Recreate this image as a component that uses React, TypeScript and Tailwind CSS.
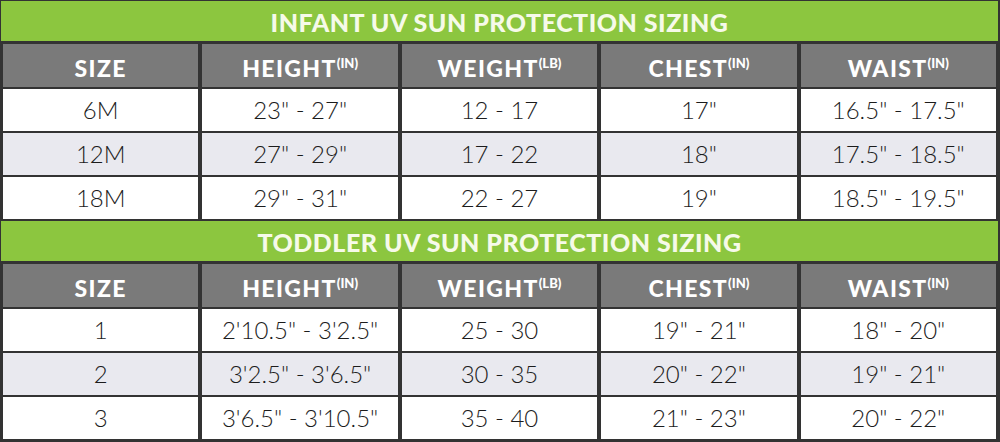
const HEADERS: [string, string | null][] = [
  ['SIZE', null],
  ['HEIGHT', '(IN)'],
  ['WEIGHT', '(LB)'],
  ['CHEST', '(IN)'],
  ['WAIST', '(IN)'],
];

const INFANT = [
  ['6M', '23" - 27"', '12 - 17', '17"', '16.5" - 17.5"'],
  ['12M', '27" - 29"', '17 - 22', '18"', '17.5" - 18.5"'],
  ['18M', '29" - 31"', '22 - 27', '19"', '18.5" - 19.5"'],
];

const TODDLER = [
  ['1', '2\'10.5" - 3\'2.5"', '25 - 30', '19" - 21"', '18" - 20"'],
  ['2', '3\'2.5" - 3\'6.5"', '30 - 35', '20" - 22"', '19" - 21"'],
  ['3', '3\'6.5" - 3\'10.5"', '35 - 40', '21" - 23"', '20" - 22"'],
];

function SizingSection({ title, rows }: { title: string; rows: string[][] }) {
  return (
    <section className="flex flex-col">
      {/* green title banner */}
      <div className="flex h-[40px] items-center justify-center bg-[#8cc63f] pt-[3px] font-['Lato',sans-serif] text-[25px] font-black tracking-[0.02em] text-[#f6fae9]">
        {title}
      </div>
      <div className="grid grid-cols-5 gap-x-[4px] gap-y-[2px] pt-[3px] pr-[2px] pl-[2px]">
        {HEADERS.map(([label, unit]) => (
          <div
            key={label}
            className="flex h-[43px] items-center justify-center bg-[#7a7a7a] pt-[6px] font-['Lato',sans-serif] text-[23px] font-black tracking-[0.06em] text-white"
          >
            <span>{label}</span>
            {unit && <span className="-mt-[10px] text-[13px] font-black tracking-normal">{unit}</span>}
          </div>
        ))}
        {rows.map((row, r) =>
          row.map((cell, c) => (
            <div
              key={`${r}-${c}`}
              className={`flex h-[42px] items-center justify-center font-['Lato',sans-serif] text-[24px] font-light text-[#1c1c1c] ${
                r === 1 ? 'bg-[#e9e9ef]' : 'bg-white'
              }`}
            >
              {cell}
            </div>
          )),
        )}
      </div>
    </section>
  );
}

export default function App() {
  return (
    <div className="h-[442px] w-[1000px] overflow-hidden bg-[#333333]">
      <div className="flex flex-col gap-[2px] pt-[1px] pr-[2px] pl-[1px]">
        <SizingSection title="INFANT UV SUN PROTECTION SIZING" rows={INFANT} />
        <SizingSection title="TODDLER UV SUN PROTECTION SIZING" rows={TODDLER} />
      </div>
    </div>
  );
}
